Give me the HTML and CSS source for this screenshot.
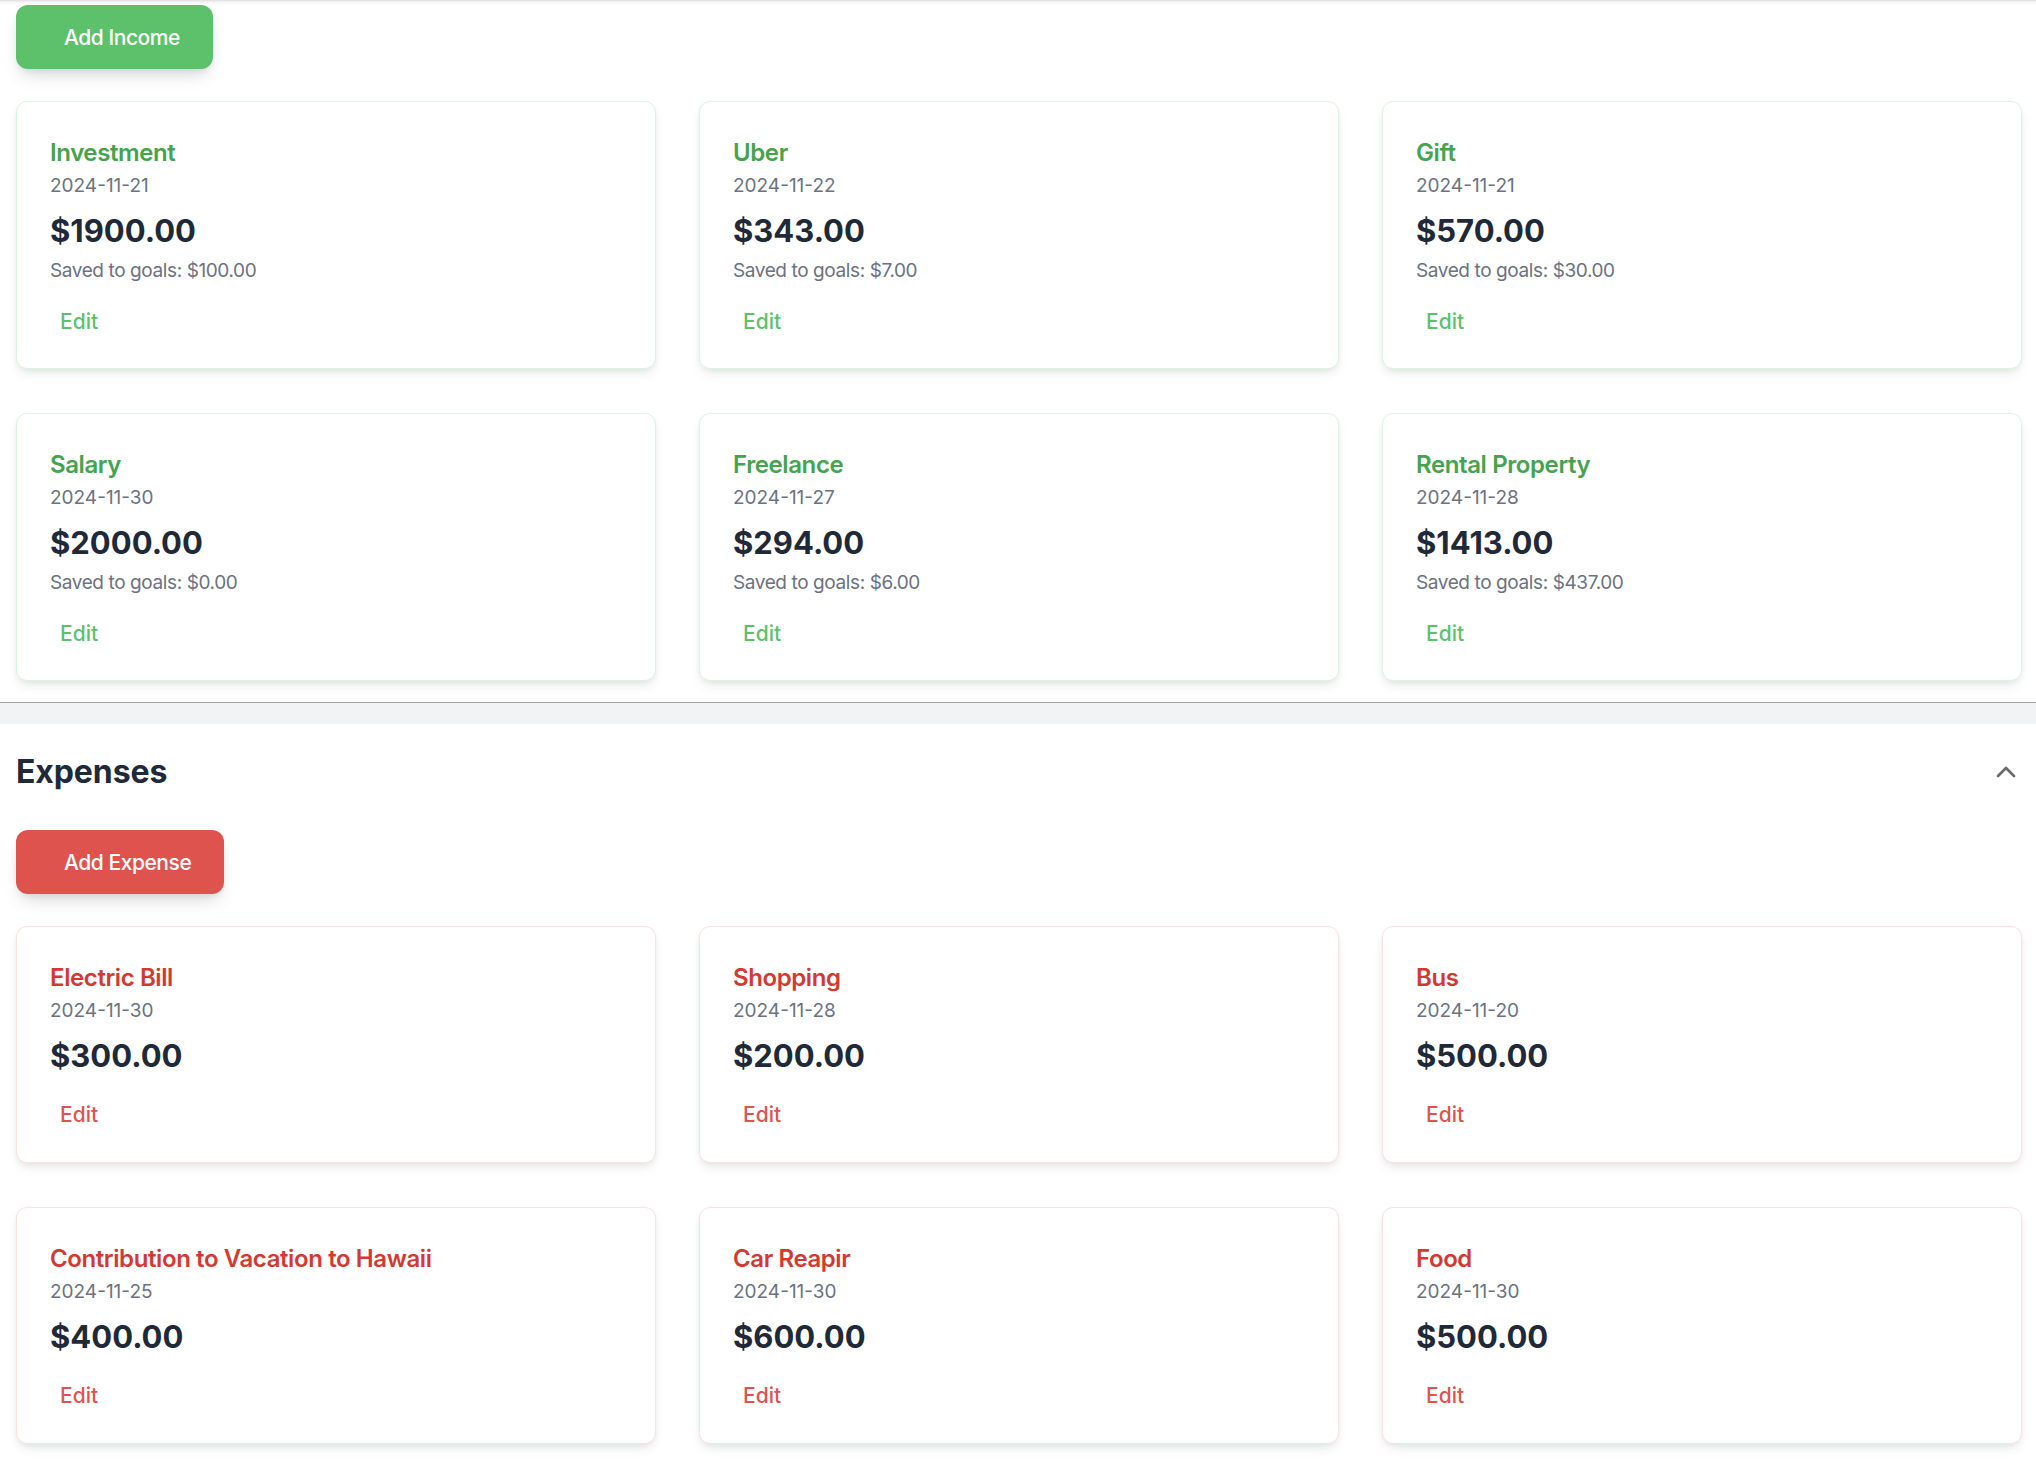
FILE: index.html
```html
<!DOCTYPE html>
<html lang="en">
<head>
<meta charset="utf-8">
<title>Income &amp; Expenses</title>
<link rel="stylesheet" href="styles.css">
</head>
<body>
<section class="panel income">
  <button class="add-btn add-income">Add Income</button>
  <div class="grid">
    <div class="card card-income">
      <h3 class="card-title">Investment</h3>
      <div class="card-date">2024-11-21</div>
      <div class="card-amount">$1900.00</div>
      <div class="card-saved">Saved to goals: $100.00</div>
      <div class="card-actions"><button class="edit-btn">Edit</button></div>
    </div>
    <div class="card card-income">
      <h3 class="card-title">Uber</h3>
      <div class="card-date">2024-11-22</div>
      <div class="card-amount">$343.00</div>
      <div class="card-saved">Saved to goals: $7.00</div>
      <div class="card-actions"><button class="edit-btn">Edit</button></div>
    </div>
    <div class="card card-income">
      <h3 class="card-title">Gift</h3>
      <div class="card-date">2024-11-21</div>
      <div class="card-amount">$570.00</div>
      <div class="card-saved">Saved to goals: $30.00</div>
      <div class="card-actions"><button class="edit-btn">Edit</button></div>
    </div>
    <div class="card card-income">
      <h3 class="card-title">Salary</h3>
      <div class="card-date">2024-11-30</div>
      <div class="card-amount">$2000.00</div>
      <div class="card-saved">Saved to goals: $0.00</div>
      <div class="card-actions"><button class="edit-btn">Edit</button></div>
    </div>
    <div class="card card-income">
      <h3 class="card-title">Freelance</h3>
      <div class="card-date">2024-11-27</div>
      <div class="card-amount">$294.00</div>
      <div class="card-saved">Saved to goals: $6.00</div>
      <div class="card-actions"><button class="edit-btn">Edit</button></div>
    </div>
    <div class="card card-income">
      <h3 class="card-title">Rental Property</h3>
      <div class="card-date">2024-11-28</div>
      <div class="card-amount">$1413.00</div>
      <div class="card-saved">Saved to goals: $437.00</div>
      <div class="card-actions"><button class="edit-btn">Edit</button></div>
    </div>
  </div>
</section>

<section class="panel expenses">
  <div class="panel-header">
    <h2 class="panel-title">Expenses</h2>
    <button class="collapse-btn" aria-label="Collapse">
      <svg viewBox="0 0 24 24" width="32" height="32" fill="none" stroke="currentColor" stroke-width="2" stroke-linecap="round" stroke-linejoin="round"><polyline points="6 15 12 9 18 15"></polyline></svg>
    </button>
  </div>
  <button class="add-btn add-expense">Add Expense</button>
  <div class="grid">
    <div class="card card-expense">
      <h3 class="card-title">Electric Bill</h3>
      <div class="card-date">2024-11-30</div>
      <div class="card-amount">$300.00</div>
      <div class="card-actions"><button class="edit-btn">Edit</button></div>
    </div>
    <div class="card card-expense">
      <h3 class="card-title">Shopping</h3>
      <div class="card-date">2024-11-28</div>
      <div class="card-amount">$200.00</div>
      <div class="card-actions"><button class="edit-btn">Edit</button></div>
    </div>
    <div class="card card-expense">
      <h3 class="card-title">Bus</h3>
      <div class="card-date">2024-11-20</div>
      <div class="card-amount">$500.00</div>
      <div class="card-actions"><button class="edit-btn">Edit</button></div>
    </div>
    <div class="card card-expense">
      <h3 class="card-title">Contribution to Vacation to Hawaii</h3>
      <div class="card-date">2024-11-25</div>
      <div class="card-amount">$400.00</div>
      <div class="card-actions"><button class="edit-btn">Edit</button></div>
    </div>
    <div class="card card-expense">
      <h3 class="card-title">Car Reapir</h3>
      <div class="card-date">2024-11-30</div>
      <div class="card-amount">$600.00</div>
      <div class="card-actions"><button class="edit-btn">Edit</button></div>
    </div>
    <div class="card card-expense">
      <h3 class="card-title">Food</h3>
      <div class="card-date">2024-11-30</div>
      <div class="card-amount">$500.00</div>
      <div class="card-actions"><button class="edit-btn">Edit</button></div>
    </div>
  </div>
</section>
</body>
</html>
```
FILE: styles.css
```css
* { box-sizing: border-box; }

html, body {
  margin: 0;
  padding: 0;
}

body {
  background: #f2f3f5;
  font-family: Inter, "Noto Sans", "Liberation Sans", sans-serif;
  color: #1f2937;
  min-height: 1462px;
}

.panel {
  background: #ffffff;
  padding-left: 16px;
  padding-right: 14px;
}

.income {
  padding-top: 5px;
  padding-bottom: 21px;
  border-bottom: 1px solid #a1a1a1;
  background: linear-gradient(to bottom, rgba(0,0,0,0.13) 0px, rgba(0,0,0,0.04) 2px, rgba(0,0,0,0) 5px), #ffffff;
}

.expenses {
  margin-top: 21px;
  padding-top: 28px;
  padding-bottom: 20px;
}

.panel-header {
  display: flex;
  align-items: center;
  justify-content: space-between;
  height: 40px;
}

.panel-title {
  margin: 0;
  font-size: 32px;
  line-height: 40px;
  font-weight: 700;
  color: #1f2937;
  letter-spacing: -0.1px;
}

.collapse-btn {
  border: none;
  background: none;
  padding: 0;
  margin: 0;
  width: 32px;
  height: 32px;
  color: #6b6b6b;
  display: flex;
  align-items: center;
  justify-content: center;
}

.collapse-btn svg { display: block; }

.add-btn {
  display: block;
  height: 64px;
  border: none;
  border-radius: 12px;
  padding: 0 33px 0 48px;
  font-family: inherit;
  font-size: 21px;
  font-weight: 500;
  letter-spacing: -0.45px;
  color: #ffffff;
  box-shadow: 0 10px 18px -5px rgba(0,0,0,0.16), 0 4px 8px -4px rgba(0,0,0,0.10);
  cursor: pointer;
}

.add-income { background: #5dc16b; }
.add-expense { background: #df534f; margin-top: 38px; }

.grid {
  display: grid;
  grid-template-columns: repeat(3, 640px);
  column-gap: 43px;
  row-gap: 44px;
  margin-top: 32px;
}

.card {
  background: #ffffff;
  border: 1px solid #dcf5e0;
  border-radius: 11px;
  padding: 33px 32px 27px 33px;
  box-shadow: 0 6px 12px -2px rgba(0,0,0,0.09), 0 2px 6px -2px rgba(0,0,0,0.07);
}

.card-expense {
  border-color: #fbe1e1;
  padding-bottom: 28px;
}

.card-title {
  margin: 0;
  font-size: 24px;
  line-height: 36px;
  font-weight: 600;
  letter-spacing: -0.4px;
}

.card-income .card-title { color: #45a34d; }
.card-expense .card-title { color: #d13a32; }

.card-date {
  font-size: 19px;
  line-height: 30px;
  color: #6b7280;
}

.card-amount {
  margin-top: 10px;
  font-size: 31px;
  line-height: 40px;
  font-weight: 700;
  color: #1f2937;
}

.card-saved {
  margin-top: 7px;
  font-size: 19px;
  line-height: 26px;
  letter-spacing: -0.4px;
  color: #6b7280;
}

.card-actions {
  margin-top: 19px;
  display: flex;
}

.card-expense .card-actions { margin-top: 20px; }

.edit-btn {
  border: none;
  background: none;
  padding: 4px 10px;
  font-family: inherit;
  font-size: 21px;
  line-height: 30px;
  font-weight: 500;
  cursor: pointer;
}

.card-income .edit-btn { color: #5dc16b; }
.card-expense .edit-btn { color: #df534f; }
```
